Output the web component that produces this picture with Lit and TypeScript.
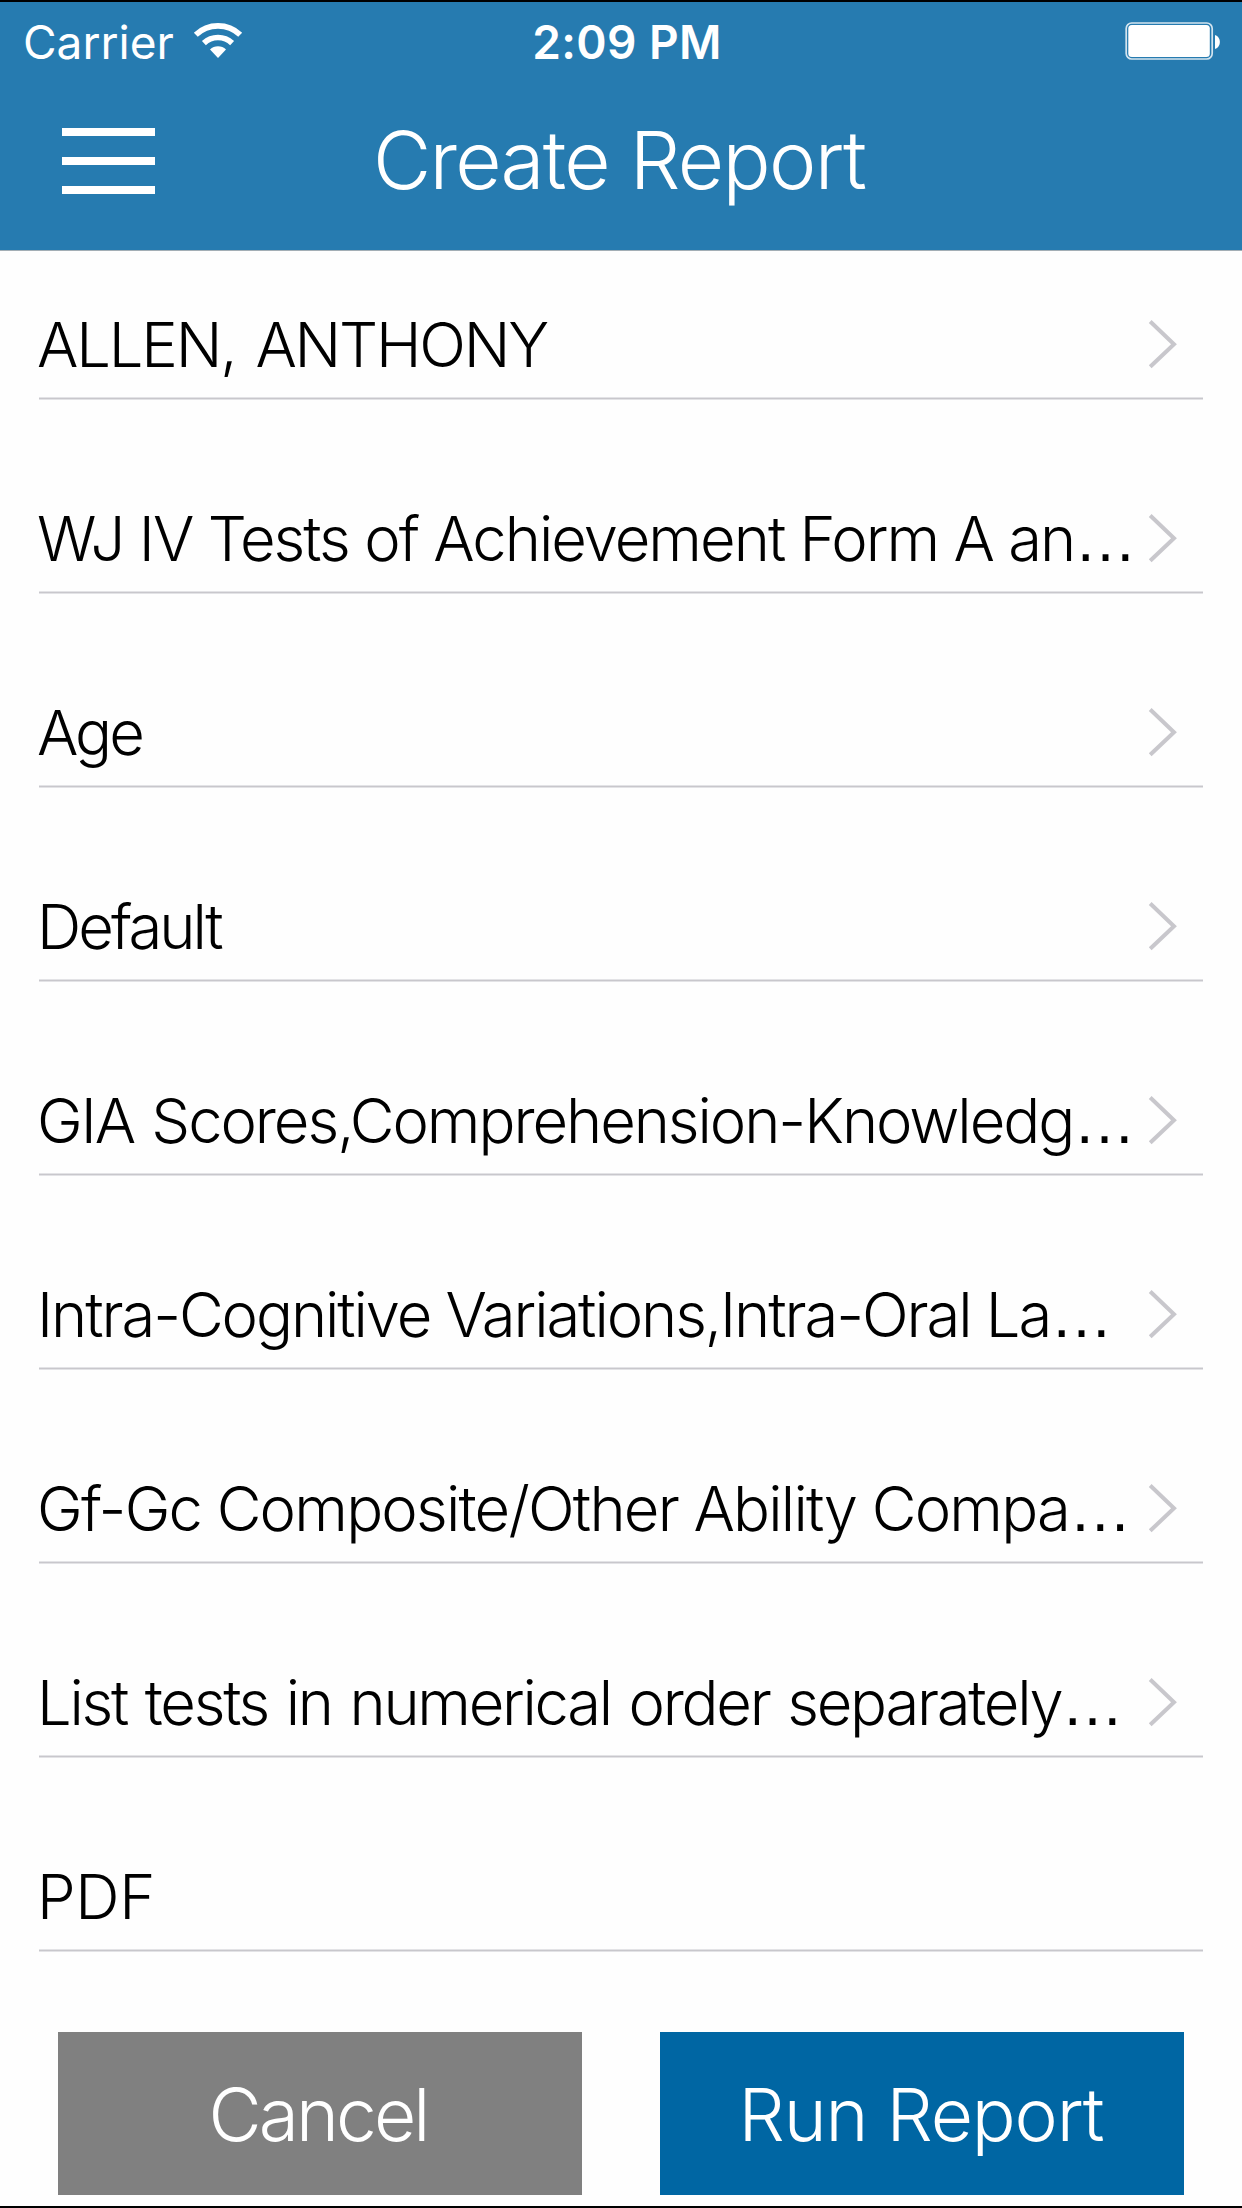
import { LitElement, html, css, nothing } from "lit";
import { customElement, property } from "lit/decorators.js";
import { styleMap } from "lit/directives/style-map.js";

interface Option {
  label: string;
  tracking: number;
  wordSpacing?: number;
  truncated?: boolean;
  chevron?: boolean;
}

const OPTIONS: Option[] = [
  { label: "ALLEN, ANTHONY", tracking: -2.2, wordSpacing: 5, chevron: true },
  { label: "WJ IV Tests of Achievement Form A an", tracking: -1.99, truncated: true, chevron: true },
  { label: "Age", tracking: -3, chevron: true },
  { label: "Default", tracking: -2.9, chevron: true },
  { label: "GIA Scores,Comprehension-Knowledg", tracking: -2.06, wordSpacing: 2, truncated: true, chevron: true },
  { label: "Intra-Cognitive Variations,Intra-Oral La", tracking: -2.08, truncated: true, chevron: true },
  { label: "Gf-Gc Composite/Other Ability Compa", tracking: -1.8, truncated: true, chevron: true },
  { label: "List tests in numerical order separately", tracking: -2.28, wordSpacing: 2.7, truncated: true, chevron: true },
  { label: "PDF", tracking: -0.3 },
];

@customElement("status-bar")
class StatusBar extends LitElement {
  static styles = css`
    :host {
      display: grid;
      grid-template-columns: 1fr auto 1fr;
      align-items: start;
      height: 78px;
      padding: 0 20px 0 23px;
      box-sizing: border-box;
      color: #fff;
      font: 400 46px/56px Inter, "Liberation Sans", sans-serif;
      white-space: nowrap;
    }
    .carrier {
      display: flex;
      padding-top: 12px;
      letter-spacing: 0;
    }
    .wifi {
      width: 50px;
      height: 40px;
      margin: 7px 0 0 19px;
    }
    .time {
      padding: 12px 0 0 9px;
      font-weight: 600;
      letter-spacing: 0.4px;
    }
    .battery {
      justify-self: end;
      width: 98px;
      height: 40px;
      margin-top: 19px;
    }
  `;
  render() {
    return html`
      <div class="carrier">
        <span>Carrier</span>
        <svg class="wifi" viewBox="193 20 50 40" fill="none" stroke="#fff" stroke-width="5.7">
          <path d="M195.8 33.7A32.2 32.2 0 0 1 240.2 33.7" />
          <path d="M203.9 42.1A20.5 20.5 0 0 1 232.1 42.1" />
          <path d="M218 57L210 48.5A11.7 11.7 0 0 1 226 48.5Z" fill="#fff" stroke="none" />
        </svg>
      </div>
      <div class="time">2:09 PM</div>
      <svg class="battery" viewBox="1124 21 98 40">
        <rect x="1126.2" y="23" width="86" height="36" rx="5.5" fill="none" stroke="#fff" stroke-opacity=".8" stroke-width="1.7" />
        <rect x="1128.3" y="25" width="81.5" height="32" rx="3.5" fill="#fff" />
        <path d="M1215 35C1221.500 37 1221.500 47 1215 49Z" fill="#fff" />
      </svg>
    `;
  }
}

@customElement("option-row")
class OptionRow extends LitElement {
  @property({ attribute: false }) option!: Option;
  static styles = css`
    :host {
      display: flex;
      justify-content: space-between;
      box-sizing: border-box;
      height: 149px;
      background: linear-gradient(#e3e3e6, #e3e3e6 1px, #c8c7cc 1px, #c8c7cc 2px, #e3e3e6 2px) 0 100% / 100% 3px no-repeat;
    }
    .label {
      margin: 54px 0 0 -2px;
      font: 300 61.5px/80px Inter, "Liberation Sans", sans-serif;
      color: #000;
      white-space: nowrap;
    }
    .dots {
      font: 400 62.5px/0 "Liberation Sans", sans-serif;
      letter-spacing: 0;
    }
    .chevron {
      flex: none;
      width: 32px;
      height: 52px;
      margin: 67px 24px 0 0;
    }
  `;
  render() {
    const o = this.option;
    const spacing = { letterSpacing: `${o.tracking}px`, wordSpacing: `${o.wordSpacing ?? 0}px` };
    return html`
      <div class="label" style=${styleMap(spacing)}>${o.label}${o.truncated ? html`<span class="dots">…</span>` : nothing}</div>
      ${o.chevron
        ? html`<svg class="chevron" viewBox="0 0 32 52" fill="none" stroke="#c8c7cc" stroke-width="4">
            <path d="M3.200 3.500L27 26.200L3.200 48.800" />
          </svg>`
        : nothing}
    `;
  }
}

@customElement("app-root")
class AppRoot extends LitElement {
  static styles = css`
    :host {
      display: flex;
      flex-direction: column;
      box-sizing: border-box;
      width: 1242px;
      height: 2208px;
      border-top: 2px solid #000;
      border-bottom: 2px solid #000;
      background: #fefefe;
      overflow: hidden;
    }
    .header {
      box-sizing: border-box;
      height: 249px;
      background: #267bb0;
      border-bottom: 1px solid #a3aeb5;
    }
    .nav {
      display: grid;
      grid-template-columns: 1fr auto 1fr;
      padding: 0 62px;
      color: #fff;
    }
    .menu {
      display: flex;
      flex-direction: column;
      gap: 21px;
      width: 93px;
      padding-top: 48px;
    }
    .bar {
      height: 8px;
      background: #fff;
    }
    .title {
      margin: 0 4px 0 0;
      padding-top: 30px;
      font: 300 80px/100px Inter, "Liberation Sans", sans-serif;
      letter-spacing: -1.7px;
      white-space: nowrap;
    }
    .options {
      display: flex;
      flex-direction: column;
      gap: 45px;
      padding: 0 39px;
    }
    .actions {
      display: grid;
      grid-template-columns: 524px 524px;
      gap: 78px;
      padding: 80px 58px 0;
    }
    .button {
      height: 163px;
      margin: 0;
      padding: 2px 2px 0 0;
      border: 0;
      border-radius: 0;
      color: #fff;
      font: 300 73px/90px Inter, "Liberation Sans", sans-serif;
      white-space: nowrap;
    }
    .cancel {
      background: #808080;
      padding-right: 4px;
      letter-spacing: -2.9px;
    }
    .run {
      background: #0066a3;
      letter-spacing: -1.2px;
    }
  `;
  render() {
    return html`
      <header class="header">
        <status-bar></status-bar>
        <div class="nav">
          <div class="menu"><div class="bar"></div><div class="bar"></div><div class="bar"></div></div>
          <h1 class="title">Create Report</h1>
        </div>
      </header>
      <main class="options">${OPTIONS.map((o) => html`<option-row .option=${o}></option-row>`)}</main>
      <div class="actions">
        <button class="button cancel">Cancel</button>
        <button class="button run">Run Report</button>
      </div>
    `;
  }
}
